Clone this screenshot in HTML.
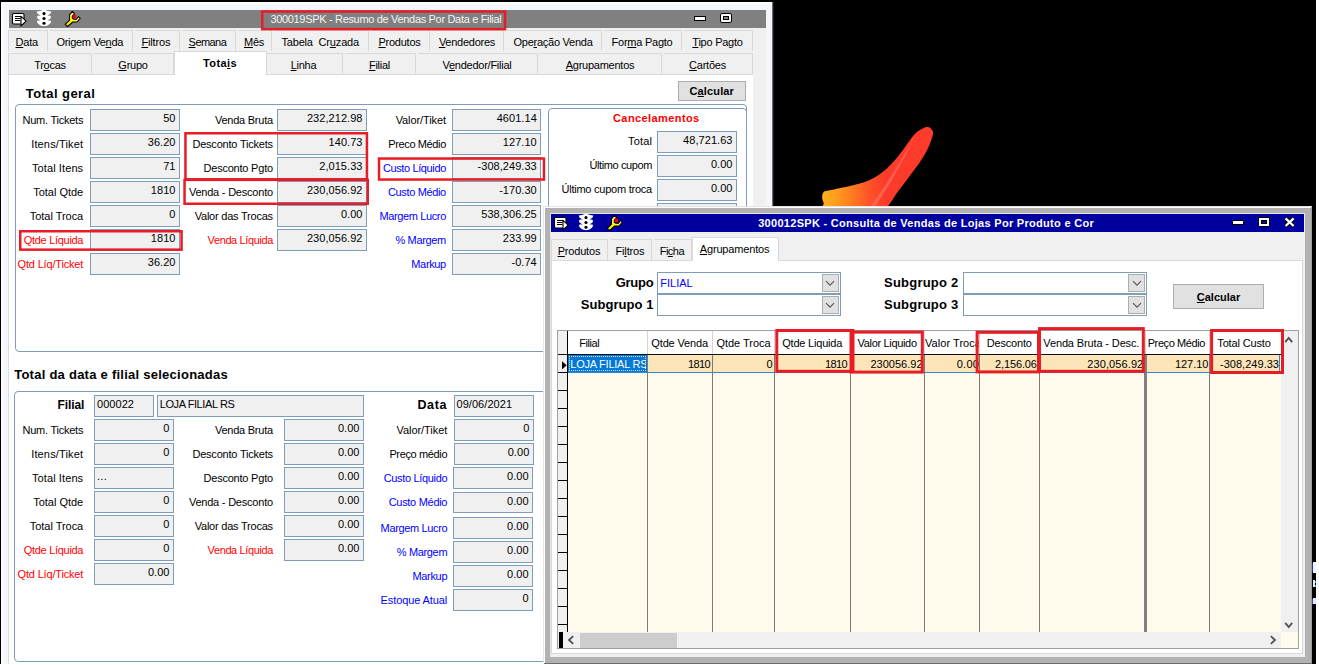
<!DOCTYPE html>
<html><head><meta charset="utf-8"><title>Resumo de Vendas</title>
<style>
html,body{margin:0;padding:0;background:#000;}
body{width:1319px;height:665px;position:relative;overflow:hidden;font-family:"Liberation Sans",sans-serif;font-size:11px;color:#000;}
#root{position:absolute;left:0;top:0;width:1319px;height:665px;overflow:hidden;background:#000;}
#root div{position:absolute;}
.t{white-space:pre;line-height:1;}
u{text-decoration:underline;text-underline-offset:1px;text-decoration-thickness:1px;}
</style></head><body><div id="root">
<svg style="position:absolute;left:810px;top:115px" width="140" height="100" viewBox="810 115 140 100">
<defs><linearGradient id="sw" x1="822" y1="0" x2="935" y2="0" gradientUnits="userSpaceOnUse">
<stop offset="0" stop-color="#ffae1c"/><stop offset="0.1" stop-color="#ffa31d"/><stop offset="0.25" stop-color="#ff7f20"/><stop offset="0.42" stop-color="#ff5227"/><stop offset="0.56" stop-color="#fb3b2a"/><stop offset="1" stop-color="#ff3b2b"/></linearGradient></defs>
<path d="M823.7 192.1 C824.9 190.9 826.6 191.0 829.2 190.3 C831.8 189.7 835.7 189.0 839.5 188.2 C843.3 187.4 848.1 186.5 852.1 185.5 C856.1 184.5 860.0 183.5 863.2 182.4 C866.4 181.3 868.5 180.5 871.1 179.2 C873.7 177.9 876.4 176.6 879.0 174.8 C881.6 173.0 884.3 170.9 886.9 168.5 C889.5 166.1 892.2 163.2 894.8 160.2 C897.4 157.2 900.1 153.8 902.7 150.3 C905.3 146.8 908.2 142.2 910.6 139.2 C913.0 136.2 914.8 133.9 916.9 132.1 C919.0 130.3 921.4 129.0 923.2 128.2 C925.1 127.4 926.5 126.8 928.0 127.1 C929.5 127.3 931.1 128.5 931.9 129.7 C932.7 130.8 933.4 131.5 933.0 134.0 C932.6 136.5 930.9 141.4 929.5 144.8 C928.1 148.2 926.8 150.8 924.8 154.2 C922.8 157.6 920.1 161.9 917.7 165.3 C915.3 168.7 913.0 171.7 910.6 174.8 C908.2 178.0 905.9 181.0 903.5 184.2 C901.1 187.3 898.9 190.1 896.4 193.7 C893.9 197.3 890.6 202.5 888.5 205.6 C886.4 208.7 894.4 210.9 884.0 212.0 C873.6 213.1 836.0 213.5 826.0 212.0 C816.0 210.5 824.4 205.6 823.7 203.2 C823.1 200.8 822.1 199.5 822.1 197.7 C822.1 195.8 822.5 193.3 823.7 192.1 Z" fill="url(#sw)"/>
<path d="M866.5 212 C880 194 898 166 914.5 137 C900 168 884 194 871.5 212 Z" fill="#ff7a6c" opacity="0.55"/>
</svg>
<div style="left:1313px;top:562px;width:3px;height:11px;background:#f2f6ff;"></div>
<div style="left:1312px;top:563px;width:1px;height:9px;background:#2030c0;"></div>
<div style="left:1313px;top:580px;width:2px;height:7px;background:#ececf8;"></div>
<div style="left:1315px;top:581px;width:1px;height:2px;background:#30b0e0;"></div>
<div style="left:1315px;top:585px;width:1px;height:2px;background:#30b0e0;"></div>
<div style="left:1313px;top:598px;width:3px;height:6px;background:#e4e8ff;"></div>
<div style="left:1312px;top:599px;width:1px;height:5px;background:#3050d0;"></div>
<div style="left:1px;top:2px;width:771px;height:663px;background:#f3f6fb;"></div>
<div style="left:1px;top:2px;width:2px;height:663px;background:#fefefe;"></div>
<div style="left:1px;top:2px;width:771px;height:2px;background:#fefefe;"></div>
<div style="left:772px;top:2px;width:1px;height:663px;background:#6a6a6a;"></div>
<div style="left:773px;top:2px;width:1px;height:663px;background:#1a1a1a;"></div>
<div style="left:9px;top:10px;width:757px;height:655px;background:#f0f0f0;"></div>
<div style="left:9px;top:10px;width:757px;height:18px;background:#808080;"></div>
<svg style="position:absolute;left:9px;top:9px" width="80" height="19" viewBox="0 -1 80 19">
<defs><linearGradient id="wr9" x1="56" y1="16" x2="68" y2="3" gradientUnits="userSpaceOnUse"><stop offset="0" stop-color="#f4e400"/><stop offset="0.45" stop-color="#fff200"/><stop offset="1" stop-color="#ffffc8"/></linearGradient></defs>
<rect x="3.5" y="3.5" width="11.5" height="10.5" rx="1.2" fill="#fff" stroke="#000" stroke-width="1.1"/>
<path d="M6 6.5 H12 M6 8.5 H11.5 M6 10.5 H11.5" stroke="#000" stroke-width="1.05"/>
<path d="M12 6.4 L17.1 11.2 L12 15.9 Z" fill="#fff" stroke="#000" stroke-width="1.1" stroke-linejoin="round"/>
<path d="M35 -0.4 L31 0.9 L27.7 1.4 L28.4 3.6 L31.6 5.7 L27.8 6.3 L28.5 8.5 L31.6 10.5 L27.8 11.1 L28.8 13.6 L31.5 15.5 L35 16.3 L38.5 15.5 L41.2 13.6 L42.2 11.1 L38.4 10.5 L41.5 8.5 L42.2 6.3 L38.4 5.7 L41.6 3.6 L42.3 1.4 L39 0.9 Z" fill="#fff"/>
<path d="M27.8 6.3 L31.6 5.7 L29.6 5.2 Z M42.2 6.3 L38.4 5.7 L40.4 5.2 Z M27.8 11.1 L31.6 10.5 L29.6 10 Z M42.2 11.1 L38.4 10.5 L40.4 10 Z" fill="#c8c8c8"/>
<circle cx="35" cy="3.6" r="1.55" fill="#000"/><circle cx="35" cy="8.5" r="1.55" fill="#000"/><circle cx="35" cy="13.3" r="1.55" fill="#000"/>
<path d="M56.2 14.4 L60.5 10.2 L60.5 4.8 L63.4 1.3 L65.6 3.7 L63.3 6.1 L63.3 8 L64.6 9.2 L67.5 9.2 L69.4 6.5 L71.2 8.4 L68 12 L63.8 12 L58.6 16.5 Z" fill="url(#wr9)" stroke="#000" stroke-width="1.05" stroke-linejoin="round"/>
<rect x="63.9" y="4.9" width="3.3" height="3.3" fill="#ff0000"/>
</svg>
<div class="t" style="left:270.40px;top:13.64px;font-size:11px;letter-spacing:-0.322px;color:#f4f4f4;">300019SPK - Resumo de Vendas Por Data e Filial</div>
<div style="left:694px;top:16px;width:12px;height:5px;background:#fff;border:1px solid #000;box-sizing:border-box;"></div>
<div style="left:720px;top:13px;width:12px;height:10px;background:#fff;border:1px solid #000;box-sizing:border-box;border-radius:2px;"></div>
<div style="left:723px;top:16px;width:6px;height:4px;background:#808080;border:1px solid #000;box-sizing:border-box;"></div>
<div style="left:8px;top:30px;width:40px;height:1px;background:#d9d9d9;"></div>
<div style="left:8px;top:30px;width:1px;height:21px;background:#d9d9d9;"></div>
<div style="left:47px;top:30px;width:1px;height:21px;background:#d9d9d9;"></div>
<div class="t" style="left:15.50px;top:36.54px;font-size:11px;letter-spacing:-0.184px;"><u>D</u>ata</div>
<div style="left:50px;top:30px;width:83px;height:1px;background:#d9d9d9;"></div>
<div style="left:132px;top:30px;width:1px;height:21px;background:#d9d9d9;"></div>
<div class="t" style="left:56.50px;top:36.54px;font-size:11px;letter-spacing:-0.318px;">Origem Ve<u>n</u>da</div>
<div style="left:135px;top:30px;width:45px;height:1px;background:#d9d9d9;"></div>
<div style="left:179px;top:30px;width:1px;height:21px;background:#d9d9d9;"></div>
<div class="t" style="left:141.50px;top:36.54px;font-size:11px;letter-spacing:-0.178px;"><u>F</u>iltros</div>
<div style="left:182px;top:30px;width:54px;height:1px;background:#d9d9d9;"></div>
<div style="left:235px;top:30px;width:1px;height:21px;background:#d9d9d9;"></div>
<div class="t" style="left:188.60px;top:36.54px;font-size:11px;letter-spacing:-0.562px;"><u>S</u>emana</div>
<div style="left:238px;top:30px;width:34px;height:1px;background:#d9d9d9;"></div>
<div style="left:271px;top:30px;width:1px;height:21px;background:#d9d9d9;"></div>
<div class="t" style="left:243.98px;top:36.54px;font-size:11px;letter-spacing:-0.250px;"><u>M</u>ês</div>
<div style="left:274px;top:30px;width:95px;height:1px;background:#d9d9d9;"></div>
<div style="left:368px;top:30px;width:1px;height:21px;background:#d9d9d9;"></div>
<div class="t" style="left:281.40px;top:36.54px;font-size:11px;letter-spacing:-0.167px;">Tabela  Cr<u>u</u>zada</div>
<div style="left:371px;top:30px;width:59px;height:1px;background:#d9d9d9;"></div>
<div style="left:429px;top:30px;width:1px;height:21px;background:#d9d9d9;"></div>
<div class="t" style="left:378.49px;top:36.54px;font-size:11px;letter-spacing:-0.250px;"><u>P</u>rodutos</div>
<div style="left:432px;top:30px;width:72px;height:1px;background:#d9d9d9;"></div>
<div style="left:503px;top:30px;width:1px;height:21px;background:#d9d9d9;"></div>
<div class="t" style="left:438.89px;top:36.54px;font-size:11px;letter-spacing:-0.250px;"><u>V</u>endedores</div>
<div style="left:506px;top:30px;width:96px;height:1px;background:#d9d9d9;"></div>
<div style="left:601px;top:30px;width:1px;height:21px;background:#d9d9d9;"></div>
<div class="t" style="left:513.47px;top:36.54px;font-size:11px;letter-spacing:-0.250px;">Ope<u>r</u>ação Venda</div>
<div style="left:604px;top:30px;width:78px;height:1px;background:#d9d9d9;"></div>
<div style="left:681px;top:30px;width:1px;height:21px;background:#d9d9d9;"></div>
<div class="t" style="left:611.58px;top:36.54px;font-size:11px;letter-spacing:-0.250px;">For<u>m</u>a Pagto</div>
<div style="left:684px;top:30px;width:69px;height:1px;background:#d9d9d9;"></div>
<div style="left:752px;top:30px;width:1px;height:21px;background:#d9d9d9;"></div>
<div class="t" style="left:692.35px;top:36.54px;font-size:11px;letter-spacing:-0.250px;"><u>T</u>ipo Pagto</div>
<div style="left:8px;top:53px;width:84px;height:1px;background:#d9d9d9;"></div>
<div style="left:8px;top:53px;width:1px;height:22px;background:#d9d9d9;"></div>
<div style="left:91px;top:53px;width:1px;height:22px;background:#d9d9d9;"></div>
<div class="t" style="left:34.14px;top:59.74px;font-size:11px;letter-spacing:-0.250px;">Tr<u>o</u>cas</div>
<div style="left:94px;top:53px;width:80px;height:1px;background:#d9d9d9;"></div>
<div style="left:173px;top:53px;width:1px;height:22px;background:#d9d9d9;"></div>
<div class="t" style="left:118.34px;top:59.74px;font-size:11px;letter-spacing:-0.250px;"><u>G</u>rupo</div>
<div style="left:264px;top:53px;width:79px;height:1px;background:#d9d9d9;"></div>
<div style="left:264px;top:53px;width:1px;height:22px;background:#d9d9d9;"></div>
<div style="left:342px;top:53px;width:1px;height:22px;background:#d9d9d9;"></div>
<div class="t" style="left:290.67px;top:59.74px;font-size:11px;letter-spacing:-0.250px;"><u>L</u>inha</div>
<div style="left:345px;top:53px;width:71px;height:1px;background:#d9d9d9;"></div>
<div style="left:415px;top:53px;width:1px;height:22px;background:#d9d9d9;"></div>
<div class="t" style="left:368.94px;top:59.74px;font-size:11px;letter-spacing:-0.250px;"><u>F</u>ilial</div>
<div style="left:418px;top:53px;width:120px;height:1px;background:#d9d9d9;"></div>
<div style="left:537px;top:53px;width:1px;height:22px;background:#d9d9d9;"></div>
<div class="t" style="left:442.49px;top:59.74px;font-size:11px;letter-spacing:-0.250px;">V<u>e</u>ndedor/Filial</div>
<div style="left:540px;top:53px;width:122px;height:1px;background:#d9d9d9;"></div>
<div style="left:661px;top:53px;width:1px;height:22px;background:#d9d9d9;"></div>
<div class="t" style="left:565.73px;top:59.74px;font-size:11px;letter-spacing:-0.250px;"><u>A</u>grupamentos</div>
<div style="left:664px;top:53px;width:89px;height:1px;background:#d9d9d9;"></div>
<div style="left:752px;top:53px;width:1px;height:22px;background:#d9d9d9;"></div>
<div class="t" style="left:689.12px;top:59.74px;font-size:11px;letter-spacing:-0.250px;"><u>C</u>artões</div>
<div style="left:8px;top:74px;width:745px;height:1px;background:#d9d9d9;"></div>
<div style="left:8px;top:75px;width:1px;height:590px;background:#dcdcdc;"></div>
<div style="left:9px;top:75px;width:743.5px;height:590px;background:#fff;"></div>
<div style="left:174px;top:51px;width:93px;height:24px;background:#fff;box-sizing:border-box;border:1px solid #d9d9d9;border-bottom:none;"></div>
<div class="t" style="left:203.00px;top:57.54px;font-size:11px;letter-spacing:0.404px;font-weight:bold;">Tota<u>i</u>s</div>
<div class="t" style="left:25.80px;top:86.82px;font-size:13px;letter-spacing:0.430px;font-weight:bold;">Total geral</div>
<div style="left:678px;top:81px;width:68px;height:20px;background:#e1e1e1;border:1px solid #adadad;box-sizing:border-box;"></div>
<div class="t" style="left:689.50px;top:85.74px;font-size:11px;letter-spacing:0.136px;font-weight:bold;">C<u>a</u>lcular</div>
<div style="left:15px;top:104px;width:732px;height:248px;border:1px solid #7f9db9;box-sizing:border-box;border-radius:4px;"></div>
<div class="t" style="left:22.50px;top:114.54px;font-size:11px;letter-spacing:-0.239px;">Num. Tickets</div>
<div style="left:90px;top:109.3px;width:90px;height:21.5px;background:#f0f0f0;border:1px solid #7f9db9;box-sizing:border-box;"></div>
<div class="t" style="left:163.16px;top:113.14px;font-size:11px;letter-spacing:0.050px;">50</div>
<div class="t" style="left:31.20px;top:138.54px;font-size:11px;letter-spacing:0.152px;">Itens/Tiket</div>
<div style="left:90px;top:133.3px;width:90px;height:21.5px;background:#f0f0f0;border:1px solid #7f9db9;box-sizing:border-box;"></div>
<div class="t" style="left:147.72px;top:137.14px;font-size:11px;letter-spacing:0.050px;">36.20</div>
<div class="t" style="left:32.00px;top:162.54px;font-size:11px;letter-spacing:0.096px;">Total Itens</div>
<div style="left:90px;top:157.3px;width:90px;height:21.5px;background:#f0f0f0;border:1px solid #7f9db9;box-sizing:border-box;"></div>
<div class="t" style="left:163.16px;top:161.14px;font-size:11px;letter-spacing:0.050px;">71</div>
<div class="t" style="left:33.20px;top:186.54px;font-size:11px;letter-spacing:-0.014px;">Total Qtde</div>
<div style="left:90px;top:181.3px;width:90px;height:21.5px;background:#f0f0f0;border:1px solid #7f9db9;box-sizing:border-box;"></div>
<div class="t" style="left:150.83px;top:185.14px;font-size:11px;letter-spacing:0.050px;">1810</div>
<div class="t" style="left:29.80px;top:210.54px;font-size:11px;letter-spacing:-0.037px;">Total Troca</div>
<div style="left:90px;top:205.3px;width:90px;height:21.5px;background:#f0f0f0;border:1px solid #7f9db9;box-sizing:border-box;"></div>
<div class="t" style="left:169.33px;top:209.14px;font-size:11px;letter-spacing:0.050px;">0</div>
<div class="t" style="left:23.70px;top:234.54px;font-size:11px;letter-spacing:-0.291px;color:#ff0000;">Qtde Líquida</div>
<div style="left:90px;top:229.3px;width:90px;height:21.5px;background:#f0f0f0;border:1px solid #7f9db9;box-sizing:border-box;"></div>
<div class="t" style="left:150.83px;top:233.14px;font-size:11px;letter-spacing:0.050px;">1810</div>
<div class="t" style="left:17.60px;top:258.54px;font-size:11px;letter-spacing:-0.176px;color:#ff0000;">Qtd Líq/Ticket</div>
<div style="left:90px;top:253.3px;width:90px;height:21.5px;background:#f0f0f0;border:1px solid #7f9db9;box-sizing:border-box;"></div>
<div class="t" style="left:147.72px;top:257.14px;font-size:11px;letter-spacing:0.050px;">36.20</div>
<div class="t" style="left:214.90px;top:114.54px;font-size:11px;letter-spacing:-0.232px;">Venda Bruta</div>
<div style="left:277px;top:109.3px;width:90px;height:21.5px;background:#f0f0f0;border:1px solid #7f9db9;box-sizing:border-box;"></div>
<div class="t" style="left:306.94px;top:113.14px;font-size:11px;letter-spacing:0.050px;">232,212.98</div>
<div class="t" style="left:192.40px;top:138.54px;font-size:11px;letter-spacing:-0.204px;">Desconto Tickets</div>
<div style="left:277px;top:133.3px;width:90px;height:21.5px;background:#f0f0f0;border:1px solid #7f9db9;box-sizing:border-box;"></div>
<div class="t" style="left:328.55px;top:137.14px;font-size:11px;letter-spacing:0.050px;">140.73</div>
<div class="t" style="left:203.50px;top:162.54px;font-size:11px;letter-spacing:-0.212px;">Desconto Pgto</div>
<div style="left:277px;top:157.3px;width:90px;height:21.5px;background:#f0f0f0;border:1px solid #7f9db9;box-sizing:border-box;"></div>
<div class="t" style="left:319.28px;top:161.14px;font-size:11px;letter-spacing:0.050px;">2,015.33</div>
<div class="t" style="left:188.90px;top:186.54px;font-size:11px;letter-spacing:-0.216px;">Venda - Desconto</div>
<div style="left:277px;top:181.3px;width:90px;height:21.5px;background:#f0f0f0;border:1px solid #7f9db9;box-sizing:border-box;"></div>
<div class="t" style="left:306.94px;top:185.14px;font-size:11px;letter-spacing:0.050px;">230,056.92</div>
<div class="t" style="left:194.70px;top:210.54px;font-size:11px;letter-spacing:-0.220px;">Valor das Trocas</div>
<div style="left:277px;top:205.3px;width:90px;height:21.5px;background:#f0f0f0;border:1px solid #7f9db9;box-sizing:border-box;"></div>
<div class="t" style="left:340.89px;top:209.14px;font-size:11px;letter-spacing:0.050px;">0.00</div>
<div class="t" style="left:207.60px;top:234.54px;font-size:11px;letter-spacing:-0.388px;color:#ff0000;">Venda Líquida</div>
<div style="left:277px;top:229.3px;width:90px;height:21.5px;background:#f0f0f0;border:1px solid #7f9db9;box-sizing:border-box;"></div>
<div class="t" style="left:306.94px;top:233.14px;font-size:11px;letter-spacing:0.050px;">230,056.92</div>
<div class="t" style="left:395.70px;top:114.54px;font-size:11px;letter-spacing:-0.104px;">Valor/Tiket</div>
<div style="left:452px;top:109.3px;width:89.3px;height:21.5px;background:#f0f0f0;border:1px solid #7f9db9;box-sizing:border-box;"></div>
<div class="t" style="left:496.69px;top:113.14px;font-size:11px;letter-spacing:0.050px;">4601.14</div>
<div class="t" style="left:388.30px;top:138.54px;font-size:11px;letter-spacing:-0.378px;">Preco Médio</div>
<div style="left:452px;top:133.3px;width:89.3px;height:21.5px;background:#f0f0f0;border:1px solid #7f9db9;box-sizing:border-box;"></div>
<div class="t" style="left:502.85px;top:137.14px;font-size:11px;letter-spacing:0.050px;">127.10</div>
<div class="t" style="left:382.90px;top:162.54px;font-size:11px;letter-spacing:-0.375px;color:#0000ff;">Custo Líquido</div>
<div style="left:452px;top:157.3px;width:89.3px;height:21.5px;background:#f0f0f0;border:1px solid #7f9db9;box-sizing:border-box;"></div>
<div class="t" style="left:477.53px;top:161.14px;font-size:11px;letter-spacing:0.050px;">-308,249.33</div>
<div class="t" style="left:387.90px;top:186.54px;font-size:11px;letter-spacing:-0.341px;color:#0000ff;">Custo Médio</div>
<div style="left:452px;top:181.3px;width:89.3px;height:21.5px;background:#f0f0f0;border:1px solid #7f9db9;box-sizing:border-box;"></div>
<div class="t" style="left:499.14px;top:185.14px;font-size:11px;letter-spacing:0.050px;">-170.30</div>
<div class="t" style="left:379.40px;top:210.54px;font-size:11px;letter-spacing:-0.368px;color:#0000ff;">Margem Lucro</div>
<div style="left:452px;top:205.3px;width:89.3px;height:21.5px;background:#f0f0f0;border:1px solid #7f9db9;box-sizing:border-box;"></div>
<div class="t" style="left:481.24px;top:209.14px;font-size:11px;letter-spacing:0.050px;">538,306.25</div>
<div class="t" style="left:395.40px;top:234.54px;font-size:11px;letter-spacing:-0.335px;color:#0000ff;">% Margem</div>
<div style="left:452px;top:229.3px;width:89.3px;height:21.5px;background:#f0f0f0;border:1px solid #7f9db9;box-sizing:border-box;"></div>
<div class="t" style="left:502.85px;top:233.14px;font-size:11px;letter-spacing:0.050px;">233.99</div>
<div class="t" style="left:411.30px;top:258.54px;font-size:11px;letter-spacing:-0.347px;color:#0000ff;">Markup</div>
<div style="left:452px;top:253.3px;width:89.3px;height:21.5px;background:#f0f0f0;border:1px solid #7f9db9;box-sizing:border-box;"></div>
<div class="t" style="left:511.48px;top:257.14px;font-size:11px;letter-spacing:0.050px;">-0.74</div>
<div style="left:548px;top:108px;width:198.5px;height:150px;border:1px solid #7f9db9;box-sizing:border-box;border-radius:4px;"></div>
<div class="t" style="left:613.00px;top:113.14px;font-size:11px;letter-spacing:0.407px;color:#ff0000;font-weight:bold;">Cancelamentos</div>
<div class="t" style="left:628.00px;top:136.24px;font-size:11px;letter-spacing:0.153px;">Total</div>
<div style="left:657px;top:131px;width:80px;height:21.5px;background:#f0f0f0;border:1px solid #7f9db9;box-sizing:border-box;"></div>
<div class="t" style="left:683.11px;top:134.84px;font-size:11px;letter-spacing:0.050px;">48,721.63</div>
<div class="t" style="left:589.50px;top:160.29px;font-size:11px;letter-spacing:-0.395px;">Último cupom</div>
<div style="left:657px;top:155.05px;width:80px;height:21.5px;background:#f0f0f0;border:1px solid #7f9db9;box-sizing:border-box;"></div>
<div class="t" style="left:710.89px;top:158.89px;font-size:11px;letter-spacing:0.050px;">0.00</div>
<div class="t" style="left:561.50px;top:184.34px;font-size:11px;letter-spacing:-0.236px;">Último cupom troca</div>
<div style="left:657px;top:179.1px;width:80px;height:21.5px;background:#f0f0f0;border:1px solid #7f9db9;box-sizing:border-box;"></div>
<div class="t" style="left:710.89px;top:182.94px;font-size:11px;letter-spacing:0.050px;">0.00</div>
<div style="left:657px;top:203.15px;width:80px;height:21.5px;background:#f0f0f0;border:1px solid #7f9db9;box-sizing:border-box;"></div>
<div class="t" style="left:732.50px;top:206.99px;font-size:11px;letter-spacing:0.050px;"></div>
<svg style="position:absolute;left:0;top:0" width="1319" height="665"><rect x="262.25" y="11.55" width="242.8" height="17.6" fill="none" stroke="#e81c24" stroke-width="2.5"/></svg>
<svg style="position:absolute;left:0;top:0" width="1319" height="665"><rect x="185.45" y="133.25" width="181.5" height="46.1" fill="none" stroke="#e81c24" stroke-width="2.5"/></svg>
<svg style="position:absolute;left:0;top:0" width="1319" height="665"><rect x="184.55" y="179.85" width="183.2" height="23.9" fill="none" stroke="#e81c24" stroke-width="2.5"/></svg>
<svg style="position:absolute;left:0;top:0" width="1319" height="665"><rect x="379.05" y="158.55" width="164.9" height="21" fill="none" stroke="#e81c24" stroke-width="2.5"/></svg>
<svg style="position:absolute;left:0;top:0" width="1319" height="665"><rect x="20.25" y="231.25" width="161.3" height="18.4" fill="none" stroke="#e81c24" stroke-width="2.5"/></svg>
<div class="t" style="left:14.20px;top:367.72px;font-size:13px;letter-spacing:0.253px;font-weight:bold;">Total da data e filial selecionadas</div>
<div style="left:14px;top:391px;width:738px;height:271px;border:1px solid #7f9db9;box-sizing:border-box;border-radius:4px;"></div>
<div class="t" style="left:57.50px;top:399.28px;font-size:12px;letter-spacing:-0.107px;font-weight:bold;">Filial</div>
<div style="left:94px;top:395px;width:60px;height:21.5px;background:#f0f0f0;border:1px solid #7f9db9;box-sizing:border-box;"></div>
<div class="t" style="left:97.00px;top:398.84px;font-size:11px;letter-spacing:0.050px;">000022</div>
<div style="left:157px;top:395px;width:207px;height:21.5px;background:#f0f0f0;border:1px solid #7f9db9;box-sizing:border-box;"></div>
<div class="t" style="left:159.70px;top:398.84px;font-size:11px;letter-spacing:-0.400px;">LOJA FILIAL RS</div>
<div class="t" style="left:417.40px;top:398.85px;font-size:12.5px;letter-spacing:0.676px;font-weight:bold;">Data</div>
<div style="left:453.5px;top:395px;width:80.3px;height:21.5px;background:#f0f0f0;border:1px solid #7f9db9;box-sizing:border-box;"></div>
<div class="t" style="left:456.50px;top:398.84px;font-size:11px;letter-spacing:0.050px;">09/06/2021</div>
<div class="t" style="left:22.50px;top:424.74px;font-size:11px;letter-spacing:-0.239px;">Num. Tickets</div>
<div style="left:94px;top:419.2px;width:80px;height:21.5px;background:#f0f0f0;border:1px solid #7f9db9;box-sizing:border-box;"></div>
<div class="t" style="left:163.33px;top:423.04px;font-size:11px;letter-spacing:0.050px;">0</div>
<div class="t" style="left:31.20px;top:448.74px;font-size:11px;letter-spacing:0.152px;">Itens/Tiket</div>
<div style="left:94px;top:443.2px;width:80px;height:21.5px;background:#f0f0f0;border:1px solid #7f9db9;box-sizing:border-box;"></div>
<div class="t" style="left:163.33px;top:447.04px;font-size:11px;letter-spacing:0.050px;">0</div>
<div class="t" style="left:32.00px;top:472.74px;font-size:11px;letter-spacing:0.096px;">Total Itens</div>
<div style="left:94px;top:467.2px;width:80px;height:21.5px;background:#f0f0f0;border:1px solid #7f9db9;box-sizing:border-box;"></div>
<div class="t" style="left:97.00px;top:471.04px;font-size:11px;letter-spacing:0.300px;">...</div>
<div class="t" style="left:33.20px;top:496.74px;font-size:11px;letter-spacing:-0.014px;">Total Qtde</div>
<div style="left:94px;top:491.2px;width:80px;height:21.5px;background:#f0f0f0;border:1px solid #7f9db9;box-sizing:border-box;"></div>
<div class="t" style="left:163.33px;top:495.04px;font-size:11px;letter-spacing:0.050px;">0</div>
<div class="t" style="left:29.80px;top:520.74px;font-size:11px;letter-spacing:-0.037px;">Total Troca</div>
<div style="left:94px;top:515.2px;width:80px;height:21.5px;background:#f0f0f0;border:1px solid #7f9db9;box-sizing:border-box;"></div>
<div class="t" style="left:163.33px;top:519.04px;font-size:11px;letter-spacing:0.050px;">0</div>
<div class="t" style="left:23.70px;top:544.74px;font-size:11px;letter-spacing:-0.291px;color:#ff0000;">Qtde Líquida</div>
<div style="left:94px;top:539.2px;width:80px;height:21.5px;background:#f0f0f0;border:1px solid #7f9db9;box-sizing:border-box;"></div>
<div class="t" style="left:163.33px;top:543.04px;font-size:11px;letter-spacing:0.050px;">0</div>
<div class="t" style="left:17.60px;top:568.74px;font-size:11px;letter-spacing:-0.176px;color:#ff0000;">Qtd Líq/Ticket</div>
<div style="left:94px;top:563.2px;width:80px;height:21.5px;background:#f0f0f0;border:1px solid #7f9db9;box-sizing:border-box;"></div>
<div class="t" style="left:147.89px;top:567.04px;font-size:11px;letter-spacing:0.050px;">0.00</div>
<div class="t" style="left:214.90px;top:424.74px;font-size:11px;letter-spacing:-0.232px;">Venda Bruta</div>
<div style="left:284px;top:419.2px;width:80px;height:21.5px;background:#f0f0f0;border:1px solid #7f9db9;box-sizing:border-box;"></div>
<div class="t" style="left:337.89px;top:423.04px;font-size:11px;letter-spacing:0.050px;">0.00</div>
<div class="t" style="left:192.40px;top:448.74px;font-size:11px;letter-spacing:-0.204px;">Desconto Tickets</div>
<div style="left:284px;top:443.2px;width:80px;height:21.5px;background:#f0f0f0;border:1px solid #7f9db9;box-sizing:border-box;"></div>
<div class="t" style="left:337.89px;top:447.04px;font-size:11px;letter-spacing:0.050px;">0.00</div>
<div class="t" style="left:203.50px;top:472.74px;font-size:11px;letter-spacing:-0.212px;">Desconto Pgto</div>
<div style="left:284px;top:467.2px;width:80px;height:21.5px;background:#f0f0f0;border:1px solid #7f9db9;box-sizing:border-box;"></div>
<div class="t" style="left:337.89px;top:471.04px;font-size:11px;letter-spacing:0.050px;">0.00</div>
<div class="t" style="left:188.90px;top:496.74px;font-size:11px;letter-spacing:-0.216px;">Venda - Desconto</div>
<div style="left:284px;top:491.2px;width:80px;height:21.5px;background:#f0f0f0;border:1px solid #7f9db9;box-sizing:border-box;"></div>
<div class="t" style="left:337.89px;top:495.04px;font-size:11px;letter-spacing:0.050px;">0.00</div>
<div class="t" style="left:194.70px;top:520.74px;font-size:11px;letter-spacing:-0.220px;">Valor das Trocas</div>
<div style="left:284px;top:515.2px;width:80px;height:21.5px;background:#f0f0f0;border:1px solid #7f9db9;box-sizing:border-box;"></div>
<div class="t" style="left:337.89px;top:519.04px;font-size:11px;letter-spacing:0.050px;">0.00</div>
<div class="t" style="left:207.60px;top:544.74px;font-size:11px;letter-spacing:-0.388px;color:#ff0000;">Venda Líquida</div>
<div style="left:284px;top:539.2px;width:80px;height:21.5px;background:#f0f0f0;border:1px solid #7f9db9;box-sizing:border-box;"></div>
<div class="t" style="left:337.89px;top:543.04px;font-size:11px;letter-spacing:0.050px;">0.00</div>
<div class="t" style="left:396.60px;top:424.84px;font-size:11px;letter-spacing:-0.068px;">Valor/Tiket</div>
<div style="left:453.6px;top:419.3px;width:80.2px;height:21.5px;background:#f0f0f0;border:1px solid #7f9db9;box-sizing:border-box;"></div>
<div class="t" style="left:523.13px;top:423.14px;font-size:11px;letter-spacing:0.050px;">0</div>
<div class="t" style="left:389.40px;top:448.64px;font-size:11px;letter-spacing:-0.359px;">Preço médio</div>
<div style="left:453.6px;top:443.1px;width:80.2px;height:21.5px;background:#f0f0f0;border:1px solid #7f9db9;box-sizing:border-box;"></div>
<div class="t" style="left:507.69px;top:446.94px;font-size:11px;letter-spacing:0.050px;">0.00</div>
<div class="t" style="left:383.70px;top:472.64px;font-size:11px;letter-spacing:-0.337px;color:#0000ff;">Custo Líquido</div>
<div style="left:453px;top:467.1px;width:80.2px;height:21.5px;background:#f0f0f0;border:1px solid #7f9db9;box-sizing:border-box;"></div>
<div class="t" style="left:507.09px;top:470.94px;font-size:11px;letter-spacing:0.050px;">0.00</div>
<div class="t" style="left:388.70px;top:497.44px;font-size:11px;letter-spacing:-0.296px;color:#0000ff;">Custo Médio</div>
<div style="left:453px;top:491.9px;width:80.2px;height:21.5px;background:#f0f0f0;border:1px solid #7f9db9;box-sizing:border-box;"></div>
<div class="t" style="left:507.09px;top:495.74px;font-size:11px;letter-spacing:0.050px;">0.00</div>
<div class="t" style="left:380.60px;top:522.64px;font-size:11px;letter-spacing:-0.360px;color:#0000ff;">Margem Lucro</div>
<div style="left:453px;top:517.1px;width:80.2px;height:21.5px;background:#f0f0f0;border:1px solid #7f9db9;box-sizing:border-box;"></div>
<div class="t" style="left:507.09px;top:520.94px;font-size:11px;letter-spacing:0.050px;">0.00</div>
<div class="t" style="left:396.80px;top:546.74px;font-size:11px;letter-spacing:-0.348px;color:#0000ff;">% Margem</div>
<div style="left:453px;top:541.2px;width:80.2px;height:21.5px;background:#f0f0f0;border:1px solid #7f9db9;box-sizing:border-box;"></div>
<div class="t" style="left:507.09px;top:545.04px;font-size:11px;letter-spacing:0.050px;">0.00</div>
<div class="t" style="left:412.50px;top:570.84px;font-size:11px;letter-spacing:-0.330px;color:#0000ff;">Markup</div>
<div style="left:453px;top:565.3px;width:80.2px;height:21.5px;background:#f0f0f0;border:1px solid #7f9db9;box-sizing:border-box;"></div>
<div class="t" style="left:507.09px;top:569.14px;font-size:11px;letter-spacing:0.050px;">0.00</div>
<div class="t" style="left:380.60px;top:594.94px;font-size:11px;letter-spacing:-0.099px;color:#0000ff;">Estoque Atual</div>
<div style="left:453px;top:589.4px;width:80.2px;height:21.5px;background:#f0f0f0;border:1px solid #7f9db9;box-sizing:border-box;"></div>
<div class="t" style="left:522.53px;top:593.24px;font-size:11px;letter-spacing:0.050px;">0</div>
<div style="left:543px;top:206px;width:769px;height:457px;background:#e6e6e6;"></div>
<div style="left:544px;top:207px;width:768px;height:456px;background:#ffffff;"></div>
<div style="left:545px;top:208px;width:767px;height:455px;background:#b2b2b2;"></div>
<div style="left:544px;top:663px;width:768px;height:1px;background:#6e6e6e;"></div>
<div style="left:1311px;top:207px;width:1px;height:456px;background:#9a9a9a;"></div>
<div style="left:550px;top:213px;width:755px;height:1px;background:#e4e4dc;"></div>
<div style="left:550px;top:213px;width:1px;height:444px;background:#e4e4dc;"></div>
<div style="left:551px;top:214px;width:754px;height:443px;background:#f0f0f0;"></div>
<div style="left:551px;top:213.6px;width:753px;height:18.4px;background:#00009f;"></div>
<svg style="position:absolute;left:551px;top:212.8px" width="80" height="19" viewBox="0 -1 80 19">
<defs><linearGradient id="wr551" x1="56" y1="16" x2="68" y2="3" gradientUnits="userSpaceOnUse"><stop offset="0" stop-color="#f4e400"/><stop offset="0.45" stop-color="#fff200"/><stop offset="1" stop-color="#ffffc8"/></linearGradient></defs>
<rect x="3.5" y="3.5" width="11.5" height="10.5" rx="1.2" fill="#fff" stroke="#000" stroke-width="1.1"/>
<path d="M6 6.5 H12 M6 8.5 H11.5 M6 10.5 H11.5" stroke="#000" stroke-width="1.05"/>
<path d="M12 6.4 L17.1 11.2 L12 15.9 Z" fill="#fff" stroke="#000" stroke-width="1.1" stroke-linejoin="round"/>
<path d="M35 -0.4 L31 0.9 L27.7 1.4 L28.4 3.6 L31.6 5.7 L27.8 6.3 L28.5 8.5 L31.6 10.5 L27.8 11.1 L28.8 13.6 L31.5 15.5 L35 16.3 L38.5 15.5 L41.2 13.6 L42.2 11.1 L38.4 10.5 L41.5 8.5 L42.2 6.3 L38.4 5.7 L41.6 3.6 L42.3 1.4 L39 0.9 Z" fill="#fff"/>
<path d="M27.8 6.3 L31.6 5.7 L29.6 5.2 Z M42.2 6.3 L38.4 5.7 L40.4 5.2 Z M27.8 11.1 L31.6 10.5 L29.6 10 Z M42.2 11.1 L38.4 10.5 L40.4 10 Z" fill="#c8c8c8"/>
<circle cx="35" cy="3.6" r="1.55" fill="#000"/><circle cx="35" cy="8.5" r="1.55" fill="#000"/><circle cx="35" cy="13.3" r="1.55" fill="#000"/>
<path d="M56.2 14.4 L60.5 10.2 L60.5 4.8 L63.4 1.3 L65.6 3.7 L63.3 6.1 L63.3 8 L64.6 9.2 L67.5 9.2 L69.4 6.5 L71.2 8.4 L68 12 L63.8 12 L58.6 16.5 Z" fill="url(#wr551)" stroke="#000" stroke-width="1.05" stroke-linejoin="round"/>
<rect x="63.9" y="4.9" width="3.3" height="3.3" fill="#ff0000"/>
</svg>
<div class="t" style="left:758.20px;top:218.14px;font-size:11px;letter-spacing:0.293px;color:#fff;font-weight:bold;">300012SPK - Consulta de Vendas de Lojas Por Produto e Cor</div>
<div style="left:1232px;top:220px;width:12px;height:5px;background:#fff;border:1px solid #000;box-sizing:border-box;"></div>
<div style="left:1258px;top:217px;width:11.5px;height:10px;background:#00009f;border:1px solid #000;box-sizing:border-box;"></div>
<div style="left:1259px;top:218px;width:10px;height:8px;box-sizing:border-box;border:2px solid #fff;"></div>
<div style="left:1261px;top:220px;width:6px;height:4px;background:#00009f;border:1px solid #000;box-sizing:border-box;"></div>
<svg style="position:absolute;left:1282px;top:215px" width="16" height="14" viewBox="1282 215 16 14"><path d="M1285.6 218.3 L1293.6 226 M1293.6 218.3 L1285.6 226" stroke="#000" stroke-width="4.2" stroke-linecap="butt"/><path d="M1285.6 218.3 L1293.6 226 M1293.6 218.3 L1285.6 226" stroke="#fff" stroke-width="2.3" stroke-linecap="butt"/></svg>
<div style="left:551px;top:239px;width:57px;height:1px;background:#d9d9d9;"></div>
<div style="left:551px;top:239px;width:1px;height:21px;background:#d9d9d9;"></div>
<div style="left:607px;top:239px;width:1px;height:21px;background:#d9d9d9;"></div>
<div class="t" style="left:557.70px;top:245.74px;font-size:11px;letter-spacing:-0.191px;"><u>P</u>rodutos</div>
<div style="left:610px;top:239px;width:42px;height:1px;background:#d9d9d9;"></div>
<div style="left:651px;top:239px;width:1px;height:21px;background:#d9d9d9;"></div>
<div class="t" style="left:615.40px;top:245.74px;font-size:11px;letter-spacing:-0.121px;">Fi<u>l</u>tros</div>
<div style="left:654px;top:239px;width:38px;height:1px;background:#d9d9d9;"></div>
<div style="left:691px;top:239px;width:1px;height:21px;background:#d9d9d9;"></div>
<div class="t" style="left:659.70px;top:245.74px;font-size:11px;letter-spacing:-0.520px;">Fi<u>c</u>ha</div>
<div style="left:551px;top:260px;width:752px;height:393.5px;background:#fff;box-sizing:border-box;border:1px solid #d9d9d9;"></div>
<div style="left:692px;top:237px;width:87px;height:24px;background:#fff;box-sizing:border-box;border:1px solid #d9d9d9;border-bottom:none;"></div>
<div class="t" style="left:699.80px;top:243.74px;font-size:11px;letter-spacing:-0.170px;"><u>A</u>grupamentos</div>
<div style="left:657px;top:272.3px;width:183.5px;height:22px;background:#fff;border:1px solid #7f9db9;box-sizing:border-box;"></div>
<div style="left:821.5px;top:274.3px;width:17px;height:18px;background:#e1e1e1;border:1px solid #adadad;box-sizing:border-box;"></div>
<svg style="position:absolute;left:825px;top:280.3px" width="10" height="7" viewBox="0 0 10 7"><path d="M1 1.2 L5 5.2 L9 1.2" fill="none" stroke="#555" stroke-width="1.1"/></svg>
<div class="t" style="left:660.30px;top:278.44px;font-size:11px;letter-spacing:0.000px;color:#0000ff;">FILIAL</div>
<div style="left:657px;top:294px;width:183.5px;height:22px;background:#fff;border:1px solid #7f9db9;box-sizing:border-box;"></div>
<div style="left:821.5px;top:296px;width:17px;height:18px;background:#e1e1e1;border:1px solid #adadad;box-sizing:border-box;"></div>
<svg style="position:absolute;left:825px;top:302px" width="10" height="7" viewBox="0 0 10 7"><path d="M1 1.2 L5 5.2 L9 1.2" fill="none" stroke="#555" stroke-width="1.1"/></svg>
<div style="left:963.3px;top:272.3px;width:184px;height:22px;background:#fff;border:1px solid #7f9db9;box-sizing:border-box;"></div>
<div style="left:1128.3px;top:274.3px;width:17px;height:18px;background:#e1e1e1;border:1px solid #adadad;box-sizing:border-box;"></div>
<svg style="position:absolute;left:1131.8px;top:280.3px" width="10" height="7" viewBox="0 0 10 7"><path d="M1 1.2 L5 5.2 L9 1.2" fill="none" stroke="#555" stroke-width="1.1"/></svg>
<div style="left:963.3px;top:294px;width:184px;height:22px;background:#fff;border:1px solid #7f9db9;box-sizing:border-box;"></div>
<div style="left:1128.3px;top:296px;width:17px;height:18px;background:#e1e1e1;border:1px solid #adadad;box-sizing:border-box;"></div>
<svg style="position:absolute;left:1131.8px;top:302px" width="10" height="7" viewBox="0 0 10 7"><path d="M1 1.2 L5 5.2 L9 1.2" fill="none" stroke="#555" stroke-width="1.1"/></svg>
<div class="t" style="left:615.80px;top:276.32px;font-size:13px;letter-spacing:-0.299px;font-weight:bold;">Grupo</div>
<div class="t" style="left:580.80px;top:298.22px;font-size:13px;letter-spacing:0.048px;font-weight:bold;">Subgrupo 1</div>
<div class="t" style="left:884.00px;top:276.32px;font-size:13px;letter-spacing:0.228px;font-weight:bold;">Subgrupo 2</div>
<div class="t" style="left:884.00px;top:298.22px;font-size:13px;letter-spacing:0.228px;font-weight:bold;">Subgrupo 3</div>
<div style="left:1173.3px;top:284.3px;width:91px;height:24.7px;background:#e1e1e1;border:1px solid #adadad;box-sizing:border-box;"></div>
<div class="t" style="left:1196.80px;top:291.54px;font-size:11px;letter-spacing:0.000px;font-weight:bold;"><u>C</u>alcular</div>
<div style="left:557px;top:330px;width:742px;height:319px;background:#fffaeb;border:1px solid #a0a0a0;box-sizing:border-box;"></div>
<div style="left:558px;top:331px;width:723px;height:23px;background:#fff;"></div>
<div style="left:558px;top:331px;width:9px;height:23px;background:#f0f0f0;"></div>
<div style="left:647px;top:331px;width:1px;height:23px;background:#d4d4d4;"></div>
<div style="left:712px;top:331px;width:1px;height:23px;background:#d4d4d4;"></div>
<div style="left:774px;top:331px;width:1px;height:23px;background:#d4d4d4;"></div>
<div style="left:850px;top:331px;width:1px;height:23px;background:#d4d4d4;"></div>
<div style="left:924px;top:331px;width:1px;height:23px;background:#d4d4d4;"></div>
<div style="left:979px;top:331px;width:1px;height:23px;background:#d4d4d4;"></div>
<div style="left:1039px;top:331px;width:1px;height:23px;background:#d4d4d4;"></div>
<div style="left:1145px;top:331px;width:1px;height:23px;background:#d4d4d4;"></div>
<div style="left:1209px;top:331px;width:1px;height:23px;background:#d4d4d4;"></div>
<div style="left:558px;top:354px;width:723px;height:1px;background:#101010;"></div>
<div style="left:568px;top:355px;width:712px;height:17px;background:#fce5b9;"></div>
<div style="left:568px;top:372px;width:712px;height:1px;background:#2a86d8;"></div>
<div style="left:1279px;top:355px;width:1px;height:18px;background:#2a86d8;"></div>
<div style="left:568px;top:355px;width:79px;height:17px;background:#0078d7;"></div>
<div style="left:569px;top:356px;width:77px;height:15px;box-sizing:border-box;border:1px dotted #e6dcc8;"></div>
<div style="left:647px;top:355px;width:1px;height:277px;background:#7a7a7a;"></div>
<div style="left:712px;top:355px;width:1px;height:277px;background:#7a7a7a;"></div>
<div style="left:774px;top:355px;width:1px;height:277px;background:#7a7a7a;"></div>
<div style="left:850px;top:355px;width:1px;height:277px;background:#7a7a7a;"></div>
<div style="left:924px;top:355px;width:1px;height:277px;background:#7a7a7a;"></div>
<div style="left:979px;top:355px;width:1px;height:277px;background:#7a7a7a;"></div>
<div style="left:1039px;top:355px;width:1px;height:277px;background:#7a7a7a;"></div>
<div style="left:1144px;top:355px;width:3px;height:277px;background:#808080;"></div>
<div style="left:1209px;top:355px;width:1px;height:277px;background:#7a7a7a;"></div>
<div style="left:558px;top:355px;width:9px;height:277px;background:#f0f0f0;"></div>
<div style="left:567px;top:331px;width:1px;height:301px;background:#000;"></div>
<div style="left:558px;top:372px;width:9px;height:1px;background:#000;"></div>
<div style="left:558px;top:390px;width:9px;height:1px;background:#000;"></div>
<div style="left:558px;top:408px;width:9px;height:1px;background:#000;"></div>
<div style="left:558px;top:426px;width:9px;height:1px;background:#000;"></div>
<div style="left:558px;top:444px;width:9px;height:1px;background:#000;"></div>
<div style="left:558px;top:462px;width:9px;height:1px;background:#000;"></div>
<div style="left:558px;top:480px;width:9px;height:1px;background:#000;"></div>
<div style="left:558px;top:498px;width:9px;height:1px;background:#000;"></div>
<div style="left:558px;top:516px;width:9px;height:1px;background:#000;"></div>
<div style="left:558px;top:534px;width:9px;height:1px;background:#000;"></div>
<div style="left:558px;top:552px;width:9px;height:1px;background:#000;"></div>
<div style="left:558px;top:570px;width:9px;height:1px;background:#000;"></div>
<div style="left:558px;top:588px;width:9px;height:1px;background:#000;"></div>
<div style="left:558px;top:606px;width:9px;height:1px;background:#000;"></div>
<div style="left:558px;top:624px;width:9px;height:1px;background:#000;"></div>
<svg style="position:absolute;left:561px;top:360px" width="7" height="11" viewBox="561 360 7 11"><path d="M562 361.2 L566.6 365.3 L562 369.4 Z" fill="#000"/></svg>
<div class="t" style="left:579.20px;top:337.84px;font-size:11px;letter-spacing:-0.436px;">Filial</div>
<div class="t" style="left:651.30px;top:337.84px;font-size:11px;letter-spacing:-0.141px;">Qtde Venda</div>
<div class="t" style="left:716.50px;top:337.84px;font-size:11px;letter-spacing:-0.042px;">Qtde Troca</div>
<div class="t" style="left:782.20px;top:337.84px;font-size:11px;letter-spacing:-0.198px;">Qtde Liquida</div>
<div class="t" style="left:857.60px;top:337.84px;font-size:11px;letter-spacing:-0.331px;">Valor Liquido</div>
<div class="t" style="left:925.00px;top:337.84px;font-size:11px;letter-spacing:0.052px;width:54px;overflow:hidden;">Valor Troca</div>
<div class="t" style="left:986.70px;top:337.84px;font-size:11px;letter-spacing:-0.184px;">Desconto</div>
<div class="t" style="left:1043.30px;top:337.84px;font-size:11px;letter-spacing:-0.129px;">Venda Bruta - Desc.</div>
<div class="t" style="left:1147.70px;top:337.84px;font-size:11px;letter-spacing:-0.405px;">Preço Médio</div>
<div class="t" style="left:1217.30px;top:337.84px;font-size:11px;letter-spacing:-0.148px;">Total Custo</div>
<div class="t" style="left:570.30px;top:358.74px;font-size:11px;letter-spacing:-0.235px;color:#fff;width:76px;overflow:hidden;">LOJA FILIAL RS</div>
<div class="t" style="left:688.00px;top:358.74px;font-size:11px;letter-spacing:-0.618px;">1810</div>
<div class="t" style="left:766.50px;top:358.74px;font-size:11px;letter-spacing:-0.618px;">0</div>
<div class="t" style="left:825.00px;top:358.74px;font-size:11px;letter-spacing:-0.618px;">1810</div>
<div class="t" style="left:870.50px;top:358.74px;font-size:11px;letter-spacing:0.000px;width:52.5px;overflow:hidden;">230056.92</div>
<div class="t" style="left:956.70px;top:358.74px;font-size:11px;letter-spacing:0.298px;width:22.3px;overflow:hidden;">0.00</div>
<div class="t" style="left:995.00px;top:358.74px;font-size:11px;letter-spacing:-0.127px;">2,156.06</div>
<div class="t" style="left:1087.30px;top:358.74px;font-size:11px;letter-spacing:0.095px;">230,056.92</div>
<div class="t" style="left:1175.00px;top:358.74px;font-size:11px;letter-spacing:-0.058px;">127.10</div>
<div class="t" style="left:1220.00px;top:358.74px;font-size:11px;letter-spacing:0.026px;">-308,249.33</div>
<div style="left:1281px;top:331px;width:17px;height:301px;background:#f0f0f0;"></div>
<div style="left:558px;top:632px;width:723px;height:16px;background:#f0f0f0;"></div>
<div style="left:1281px;top:632px;width:17px;height:16px;background:#fffaeb;"></div>
<div style="left:559px;top:632px;width:4px;height:16px;background:#000;"></div>
<div style="left:580px;top:633px;width:97px;height:15px;background:#cdcdcd;"></div>
<svg style="position:absolute;left:566px;top:635px" width="10" height="10" viewBox="0 0 10 10"><path d="M7.2 1.2 L3 5 L7.2 8.8" fill="none" stroke="#505050" stroke-width="1.8"/></svg>
<svg style="position:absolute;left:1268px;top:635px" width="10" height="10" viewBox="0 0 10 10"><path d="M2.8 1.2 L7 5 L2.8 8.8" fill="none" stroke="#505050" stroke-width="1.8"/></svg>
<svg style="position:absolute;left:1284px;top:335px" width="10" height="10" viewBox="0 0 10 10"><path d="M1.2 7.2 L4.7 3 L8.2 7.2" fill="none" stroke="#505050" stroke-width="1.8"/></svg>
<svg style="position:absolute;left:1284px;top:620px" width="10" height="10" viewBox="0 0 10 10"><path d="M1.2 2.8 L4.7 7 L8.2 2.8" fill="none" stroke="#505050" stroke-width="1.8"/></svg>
<svg style="position:absolute;left:0;top:0" width="1319" height="665"><rect x="776.8" y="330.5" width="76.2" height="40.8" fill="none" stroke="#e81c24" stroke-width="3"/></svg>
<svg style="position:absolute;left:0;top:0" width="1319" height="665"><rect x="851" y="332.1" width="71.3" height="40" fill="none" stroke="#e81c24" stroke-width="3"/></svg>
<svg style="position:absolute;left:0;top:0" width="1319" height="665"><rect x="977.1" y="332.3" width="61.4" height="39.6" fill="none" stroke="#e81c24" stroke-width="3"/></svg>
<svg style="position:absolute;left:0;top:0" width="1319" height="665"><rect x="1039.5" y="328.6" width="103.8" height="42.7" fill="none" stroke="#e81c24" stroke-width="3"/></svg>
<svg style="position:absolute;left:0;top:0" width="1319" height="665"><rect x="1211.6" y="330.5" width="70.9" height="42" fill="none" stroke="#e81c24" stroke-width="3"/></svg>
<div style="left:1316px;top:0px;width:3px;height:665px;background:#fff;"></div>
<div style="left:0px;top:664px;width:1319px;height:1px;background:#fff;"></div>
</div></body></html>
